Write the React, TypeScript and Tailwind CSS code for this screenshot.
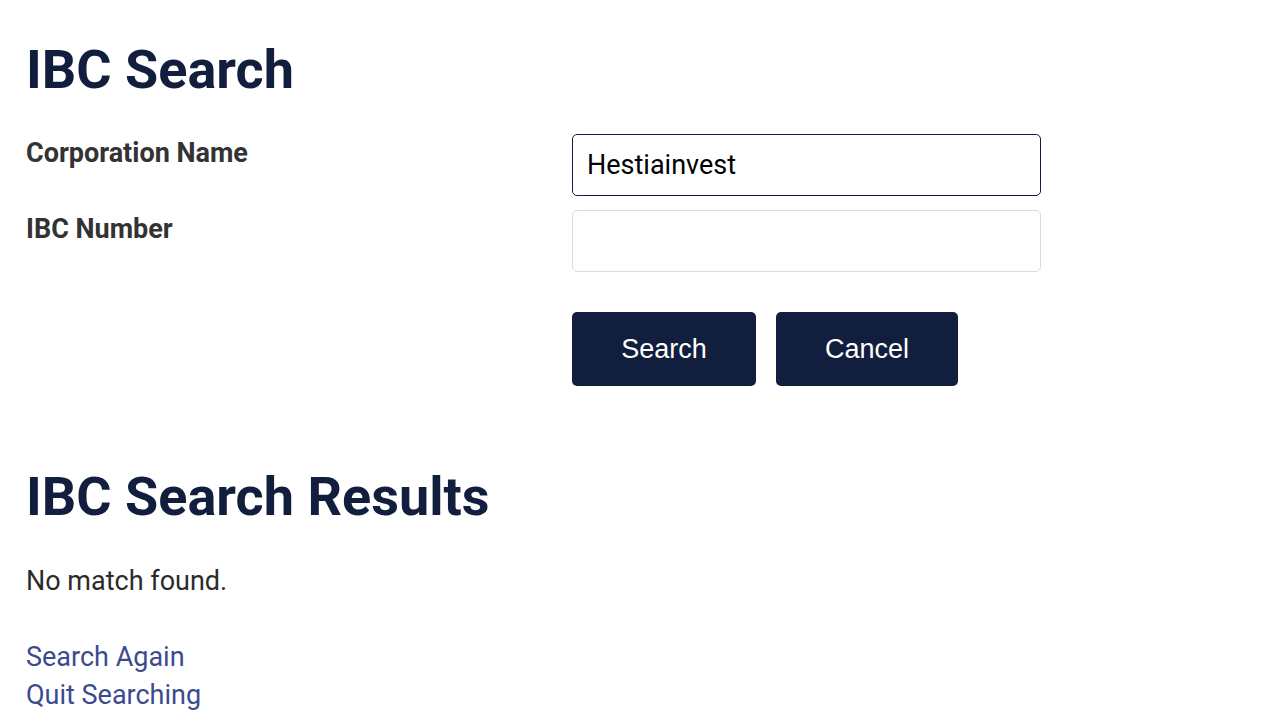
import { useEffect, useRef } from "react";

export default function App() {
  const corpRef = useRef<HTMLInputElement>(null);

  // focus the name field with the caret after the text, as in the page
  useEffect(() => {
    const el = corpRef.current;
    if (!el) return;
    el.focus();
    el.setSelectionRange(el.value.length, el.value.length);
  }, []);

  return (
    <div className="min-h-screen bg-white px-[26px] pt-[38px] font-['Roboto',sans-serif] text-[#333]">
      <h1 className="text-[54px] font-bold leading-[1.2] text-[#121e3d]">IBC Search</h1>

      <form className="mt-[31px] grid grid-cols-[546px_469px] gap-y-[14px]" onSubmit={(e) => e.preventDefault()}>
        <label htmlFor="corp" className="pt-[3px] text-[27px] font-bold leading-[1.2]">
          Corporation Name
        </label>
        <input
          id="corp"
          ref={corpRef}
          defaultValue="Hestiainvest"
          className="h-[62px] rounded-[5px] border border-[#121e3d] px-[14px] text-[27px] text-black caret-black outline-none"
        />

        <label htmlFor="ibc" className="pt-[3px] text-[27px] font-bold leading-[1.2]">
          IBC Number
        </label>
        <input
          id="ibc"
          className="h-[62px] rounded-[5px] border border-[#dcdcdc] px-[14px] text-[27px] text-black outline-none"
        />

        <div />
        <div className="mt-[26px] flex gap-[20px]">
          <button className="h-[74px] w-[184px] rounded-[5px] bg-[#121e3d] font-['Liberation_Sans',sans-serif] text-[27px] text-white">
            Search
          </button>
          <button className="h-[74px] w-[182px] rounded-[5px] bg-[#121e3d] font-['Liberation_Sans',sans-serif] text-[27px] text-white">
            Cancel
          </button>
        </div>
      </form>

      <h2 className="mt-[79px] text-[54px] font-bold leading-[1.2] text-[#121e3d]">IBC Search Results</h2>

      <p className="mt-[32px] text-[27px] leading-[38px] text-[#2b2b2b]">No match found.</p>

      <div className="mt-[38px] flex flex-col text-[27px] leading-[38px] text-[#3b4b8f]">
        <a href="#">Search Again</a>
        <a href="#">Quit Searching</a>
      </div>
    </div>
  );
}
